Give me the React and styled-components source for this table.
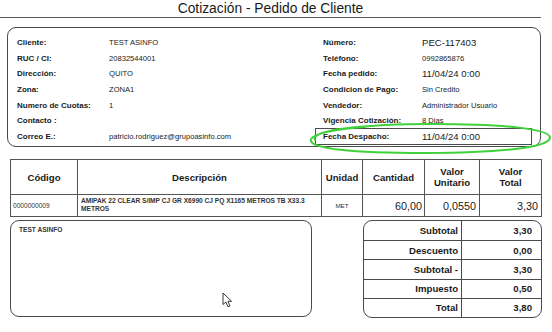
import { Fragment } from 'react';
import styled, { createGlobalStyle } from 'styled-components';

const GlobalStyle = createGlobalStyle`
  html, body {
    margin: 0;
    padding: 0;
    background: #ffffff;
  }
  body {
    font-family: "Liberation Sans", Arial, sans-serif;
    color: #1f1f1f;
  }
`;

const Page = styled.div`
  position: relative;
  width: 552px;
  height: 332px;
  overflow: hidden;
  background: #fff;
`;

const Title = styled.h1`
  box-sizing: border-box;
  height: 18px;
  margin: 0 11px 0 0;
  padding-top: 1px;
  border-bottom: 1px solid #5a5a5a;
  font-size: 13.8px;
  font-weight: normal;
  line-height: 16px;
  text-align: center;
  color: #1a1a1a;
`;

const HeaderBox = styled.section`
  box-sizing: border-box;
  height: 120px;
  margin: 9px 11px 0 7px;
  padding: 7px 0 0 9px;
  border: 1px solid #4a4a4a;
  border-radius: 9px;
  display: grid;
  grid-template-columns: 306px 1fr;
`;

const InfoColumn = styled.div`
  display: grid;
  grid-template-columns: ${({ $label }) => $label}px 1fr;
  grid-auto-rows: 15.6px;
  align-items: center;
`;

const Label = styled.div`
  font-size: 8px;
  font-weight: bold;
  color: #1a1a1a;
  white-space: nowrap;
`;

const Value = styled.div`
  font-size: ${({ $big }) => ($big ? '9.6px' : '7.6px')};
  color: #222;
  white-space: nowrap;
`;

const HighlightRow = styled.div`
  grid-column: 1 / -1;
  box-sizing: border-box;
  height: 17px;
  margin: 0 8px 0 -8px;
  padding-left: 7px;
  border: 1px solid #4a4a4a;
  display: grid;
  grid-template-columns: 99px 1fr;
  align-items: center;
`;

const ItemTable = styled.table`
  margin: 12px 0 0 10px;
  width: 531px;
  border-collapse: collapse;
  table-layout: fixed;
  color: #1a1a1a;

  th, td {
    border: 1px solid #555;
    padding: 0;
  }
`;

const HeadCell = styled.th`
  height: 34px;
  font-size: 9.6px;
  font-weight: bold;
  line-height: 11px;
  text-align: center;
`;

const Cell = styled.td`
  height: 19px;
  font-size: ${({ $size }) => $size || 10.8}px;
  font-weight: ${({ $bold }) => ($bold ? 'bold' : 'normal')};
  text-align: ${({ $align }) => $align || 'left'};
  padding: ${({ $pad }) => $pad || '0 3px'} !important;
  vertical-align: ${({ $top }) => ($top ? 'top' : 'middle')};
  line-height: ${({ $lh }) => $lh || 'normal'};
  color: ${({ $muted }) => ($muted ? '#333' : '#1a1a1a')};
`;

const Bottom = styled.div`
  display: flex;
  gap: 51px;
  margin: 3px 0 0 10px;
`;

const NotesBox = styled.div`
  box-sizing: border-box;
  width: 302px;
  height: 97px;
  padding: 5px 8px;
  border: 1px solid #4a4a4a;
  border-radius: 9px;
  font-size: 6.6px;
  font-weight: bold;
  color: #333;
`;

const TotalsBox = styled.div`
  box-sizing: border-box;
  width: 179px;
  height: 98px;
  border: 1px solid #4a4a4a;
  border-radius: 9px;
  overflow: hidden;
  display: grid;
  grid-template-columns: 98px 1fr;
  grid-template-rows: repeat(5, 1fr);
`;

const TotalLabel = styled.div`
  display: flex;
  align-items: center;
  justify-content: flex-end;
  padding-right: 3px;
  border-right: 1px solid #4a4a4a;
  border-top: ${({ $first }) => ($first ? 'none' : '1px solid #4a4a4a')};
  font-size: 9.6px;
  font-weight: bold;
  color: #1a1a1a;
`;

const TotalValue = styled(TotalLabel)`
  border-right: none;
  padding-right: 9px;
`;

const Overlay = styled.svg`
  position: absolute;
  left: ${({ $x }) => $x}px;
  top: ${({ $y }) => $y}px;
  pointer-events: none;
`;

const leftInfo = [
  ['Cliente:', 'TEST ASINFO'],
  ['RUC / CI:', '20832544001'],
  ['Dirección:', 'QUITO'],
  ['Zona:', 'ZONA1'],
  ['Numero de Cuotas:', '1'],
  ['Contacto :', ''],
  ['Correo E.:', 'patricio.rodriguez@grupoasinfo.com'],
];

const rightInfo = [
  ['Número:', 'PEC-117403', true],
  ['Teléfono:', '0992865876'],
  ['Fecha pedido:', '11/04/24 0:00', true],
  ['Condicion de Pago:', 'Sin Credito'],
  ['Vendedor:', 'Administrador Usuario'],
  ['Vigencia Cotización:', '8 Dias'],
];

const totals = [
  ['Subtotal', '3,30'],
  ['Descuento', '0,00'],
  ['Subtotal -', '3,30'],
  ['Impuesto', '0,50'],
  ['Total', '3,80'],
];

export default function App() {
  return (
    <>
      <GlobalStyle />
      <Page>
        <Title>Cotización - Pedido de Cliente</Title>

        <HeaderBox>
          <InfoColumn $label={92}>
            {leftInfo.map(([l, v]) => (
              <Fragment key={l}>
                <Label>{l}</Label>
                <Value>{v}</Value>
              </Fragment>
            ))}
          </InfoColumn>
          <InfoColumn $label={99}>
            {rightInfo.map(([l, v, big]) => (
              <Fragment key={l}>
                <Label>{l}</Label>
                <Value $big={big}>{v}</Value>
              </Fragment>
            ))}
            <HighlightRow>
              <Label>Fecha Despacho:</Label>
              <Value $big>11/04/24 0:00</Value>
            </HighlightRow>
          </InfoColumn>
        </HeaderBox>

        <ItemTable>
          <colgroup>
            <col style={{ width: 67 }} />
            <col style={{ width: 244 }} />
            <col style={{ width: 41 }} />
            <col style={{ width: 62 }} />
            <col style={{ width: 55 }} />
            <col style={{ width: 62 }} />
          </colgroup>
          <thead>
            <tr>
              <HeadCell>Código</HeadCell>
              <HeadCell>Descripción</HeadCell>
              <HeadCell>Unidad</HeadCell>
              <HeadCell>Cantidad</HeadCell>
              <HeadCell>Valor<br />Unitario</HeadCell>
              <HeadCell>Valor<br />Total</HeadCell>
            </tr>
          </thead>
          <tbody>
            <tr>
              <Cell $size={6.6} $muted $pad="0 2px">0000000009</Cell>
              <Cell $size={6.6} $bold $muted $top $lh="7.5px" $pad="2px 3px 0 3px">
                AMIPAK 22 CLEAR S/IMP CJ GR X6990 CJ PQ X1165 METROS TB X33.3 METROS
              </Cell>
              <Cell $size={6.2} $muted $align="center">MET</Cell>
              <Cell $align="right" $pad="0 2px">60,00</Cell>
              <Cell $align="right" $pad="0 3px">0,0550</Cell>
              <Cell $align="right" $pad="0 3px">3,30</Cell>
            </tr>
          </tbody>
        </ItemTable>

        <Bottom>
          <NotesBox>TEST ASINFO</NotesBox>
          <TotalsBox>
            {totals.map(([l, v], i) => (
              <Fragment key={l}>
                <TotalLabel $first={i === 0}>{l}</TotalLabel>
                <TotalValue $first={i === 0}>{v}</TotalValue>
              </Fragment>
            ))}
          </TotalsBox>
        </Bottom>

        <Overlay $x={305} $y={120} width="248" height="36" viewBox="0 0 248 36">
          <path
            d="M10 20 C 4 10, 60 4, 128 4 C 200 4, 246 9, 245 18 C 243 28, 190 33, 120 33 C 50 33, 2 29, 6 19 C 8 14, 30 9, 60 7"
            fill="none"
            stroke="#3fd13a"
            strokeWidth="2"
            strokeLinecap="round"
          />
        </Overlay>

        <Overlay $x={222} $y={292} width="12" height="16" viewBox="0 0 12 16">
          <path
            d="M1 1 L1 12.5 L3.8 10 L6 14.8 L8 13.9 L5.9 9.3 L9.6 9.3 Z"
            fill="#fff"
            stroke="#222"
            strokeWidth="0.9"
            strokeLinejoin="round"
          />
        </Overlay>
      </Page>
    </>
  );
}
